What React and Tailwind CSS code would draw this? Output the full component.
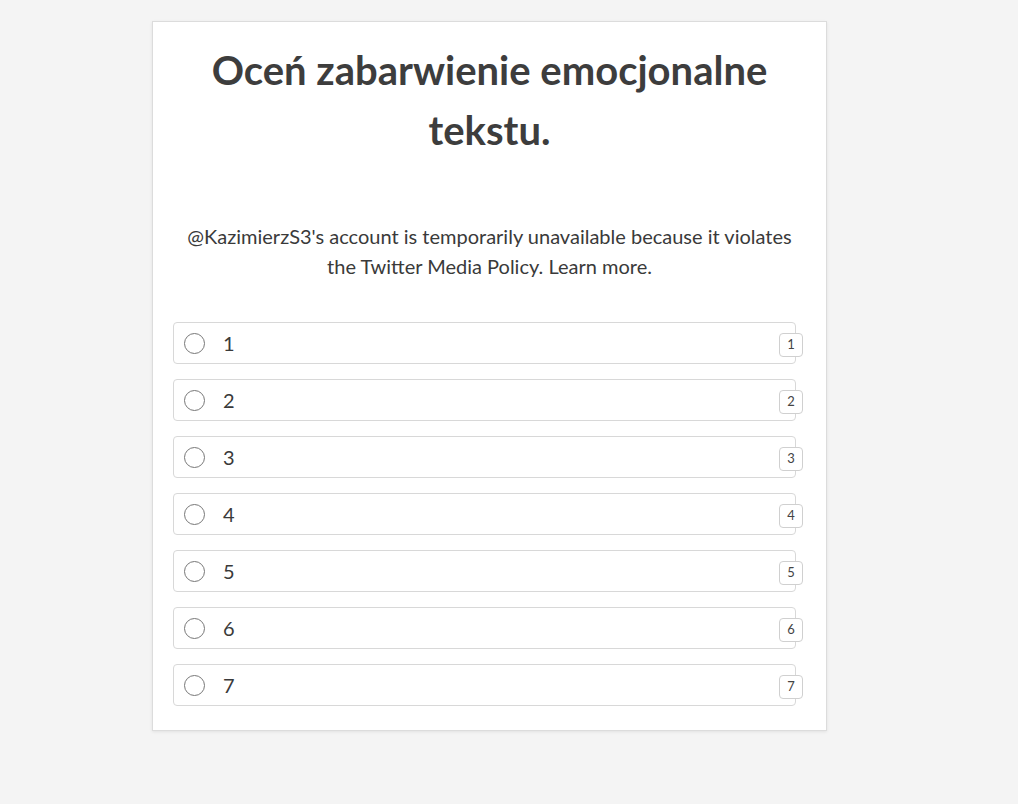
import React from "react";

const options = [1, 2, 3, 4, 5, 6, 7];

const Option = ({ value }) => {
  return (
    <label className="relative mr-[10px] flex h-[42px] cursor-pointer items-center rounded-[4px] border border-[#d8d8d8] bg-white pl-[10px]">
      <span className="h-[21px] w-[21px] rounded-full border border-[#777]" />
      <span className="ml-[18px] text-[20px] text-[#3a3a3a]">{value}</span>
      <span className="absolute right-[-8px] top-[10px] flex h-[24px] w-[24px] items-center justify-center rounded-[4px] border border-[#d0d0d0] bg-white text-[13px] text-[#444]">
        {value}
      </span>
    </label>
  );
};

export default function App() {
  return (
    <div
      className="min-h-[804px] bg-[#f4f4f4] pt-[21px]"
      style={{ fontFamily: "Lato, 'Open Sans', sans-serif" }}
    >
      <div className="ml-[152px] w-[675px] border border-[#dcdcdc] bg-white px-[20px] pt-[18px] pb-[24px] shadow-[0_1px_3px_rgba(0,0,0,0.08)]">
        <h1 className="text-center text-[40px] font-bold leading-[60px] text-[#3d3d3d]">
          Oceń zabarwienie emocjonalne tekstu.
        </h1>
        <p className="mx-auto mt-[61px] w-[620px] text-center text-[20px] leading-[30px] text-[#3a3a3a]">
          @KazimierzS3's account is temporarily unavailable because it violates the Twitter Media Policy. Learn more.
        </p>
        <div className="mt-[41px] flex flex-col gap-[15px]">
          {options.map((v) => (
            <Option key={v} value={v} />
          ))}
        </div>
      </div>
    </div>
  );
}
